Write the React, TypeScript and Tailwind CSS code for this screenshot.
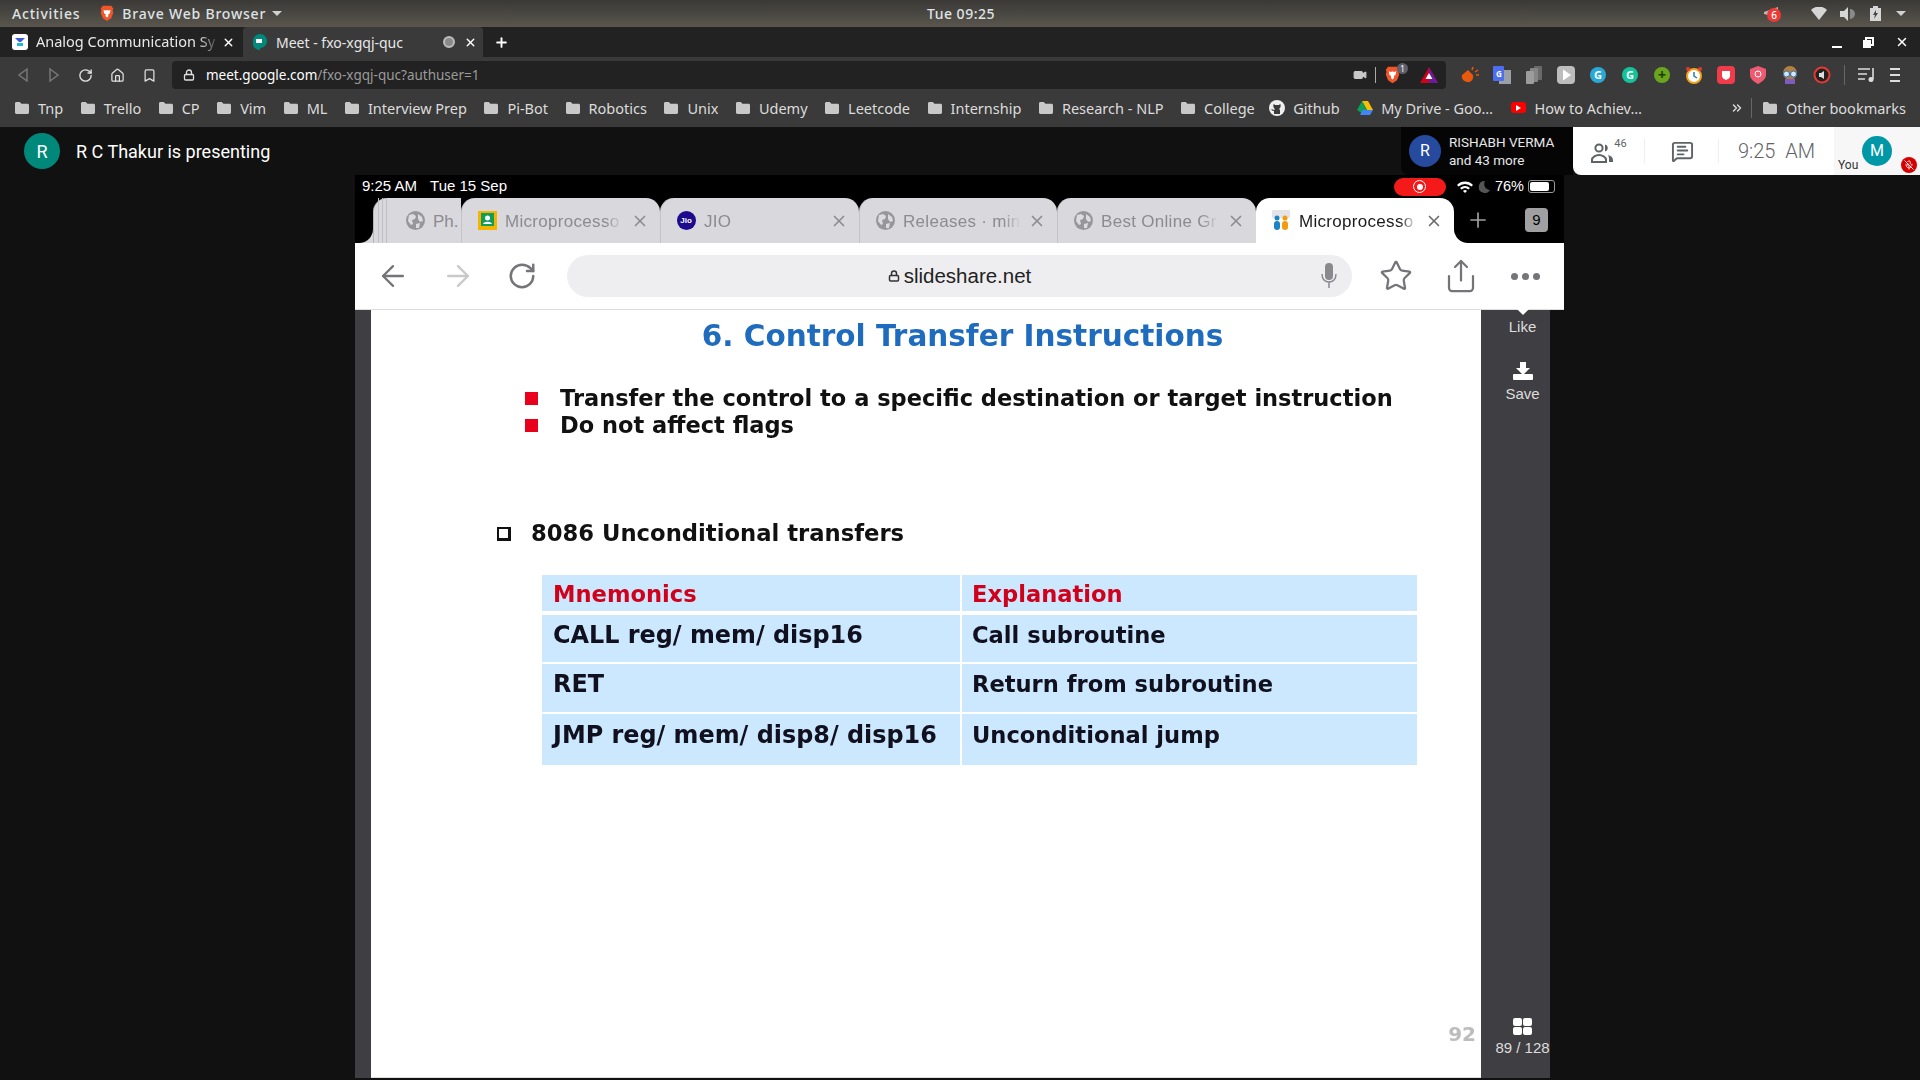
import React from 'react';
import { ArrowLeft, ArrowRight, RotateCw, Star, Share, X, Plus, Lock, Home, Bookmark, Video, MessageSquareText, MicOff, ChevronsRight } from 'lucide-react';

const ui = "font-['Noto_Sans',sans-serif]";

const Folder = () => (
  <svg width="14" height="12" viewBox="0 0 14 12" className="shrink-0">
    <path d="M0 1.5C0 .7.6 0 1.4 0h3.4l1.6 1.8h6.2c.8 0 1.4.6 1.4 1.4v7.4c0 .8-.6 1.4-1.4 1.4H1.4C.6 12 0 11.4 0 10.6z" fill="#c8c8c8" />
  </svg>
);

const BraveIcon = ({ size = 16 }: { size?: number }) => (
  <svg width={size} height={size * 1.15} viewBox="0 0 20 23">
    <path d="M4 1h12l3 4-1 3 1 3-3 8-6 4-6-4-3-8 1-3-1-3z" fill="#f1562b" />
    <path d="M5 7l3 1 2-1 2 1 3-1-1 5-2 1v3l-2 2-2-2v-3l-2-1z" fill="#fff" />
  </svg>
);

const Globe = () => (
  <svg width="19" height="19" viewBox="0 0 19 19" className="shrink-0">
    <circle cx="9.5" cy="9.5" r="9.5" fill="#97969b" />
    <path d="M3 4l4-1 3 2-1 3-3 1 1 4-2 1-3-4zM12 3l4 3 1 4-3 1-2-3zM10 13l4-1-1 5-3 0z" fill="#dcdbe0" />
  </svg>
);

const bookmarks = ['Tnp', 'Trello', 'CP', 'Vim', 'ML', 'Interview Prep', 'Pi-Bot', 'Robotics', 'Unix', 'Udemy', 'Leetcode', 'Internship', 'Research - NLP', 'College'];

const extensions: React.ReactNode[] = [
  <svg key="hand" width="18" height="18" viewBox="0 0 18 18"><path d="M1 9l6-5 5 5c1 4-2 8-6 7-4-1-6-4-5-7z" fill="#e8590c" /><path d="M11 4l1-3M14 6l3-2M15 9l3 0" stroke="#e8590c" strokeWidth="1.5" /></svg>,
  <svg key="tr" width="18" height="18" viewBox="0 0 18 18"><rect x="6" y="4" width="12" height="14" fill="#9aa0a6" /><rect width="11" height="15" rx="1" fill="#4e6ef2" /><text x="3" y="11" fontSize="8" fill="#fff" fontWeight="700">G</text></svg>,
  <svg key="cp" width="18" height="18" viewBox="0 0 18 18"><rect x="9" y="0" width="8" height="14" rx="1" fill="#6a6a6a" /><rect x="5" y="2" width="8" height="14" rx="1" fill="#858585" /><rect x="1" y="5" width="8" height="13" rx="1" fill="#9c9c9c" /></svg>,
  <svg key="pl" width="18" height="18" viewBox="0 0 18 18"><rect width="18" height="18" rx="4" fill="#bdbdbd" /><path d="M6 3.5l8 5.5-8 5.5z" fill="#fff" /></svg>,
  <div key="g1" className="w-4 h-4 rounded-full bg-[#2aa9d8] text-white text-[11px] leading-4 text-center font-bold">G</div>,
  <div key="g2" className="w-4 h-4 rounded-full bg-[#15c39a] text-white text-[11px] leading-4 text-center font-bold">G</div>,
  <div key="pl2" className="w-4 h-4 rounded-full bg-[#6aa51d] text-[#1c3b00] text-[14px] leading-[15px] text-center font-bold">+</div>,
  <svg key="cl" width="18" height="18" viewBox="0 0 18 18"><circle cx="9" cy="10" r="7" fill="#fff" stroke="#f4a21b" strokeWidth="2" /><path d="M9 6v4l3 2" stroke="#2a7fb8" strokeWidth="1.5" fill="none" /><circle cx="3" cy="3" r="2" fill="#e53935" /><circle cx="15" cy="3" r="2" fill="#e53935" /></svg>,
  <svg key="sh1" width="18" height="18" viewBox="0 0 18 18"><rect width="18" height="18" rx="4" fill="#ef3b4a" /><path d="M5 5h8v5c0 2-2 3-4 4-2-1-4-2-4-4z" fill="#fff" /></svg>,
  <svg key="sh2" width="18" height="18" viewBox="0 0 18 18"><path d="M9 0l8 3v6c0 4-4 7-8 9-4-2-8-5-8-9V3z" fill="#ee5a6f" /><circle cx="9" cy="8" r="3" fill="none" stroke="#fff" strokeWidth="1" /></svg>,
  <svg key="ow" width="18" height="18" viewBox="0 0 18 18"><circle cx="9" cy="7" r="7" fill="#b5803d" /><rect x="4" y="13" width="10" height="5" fill="#7c5cbf" /><circle cx="5.5" cy="8" r="3" fill="#cfe8ff" stroke="#2b6cb0" /><circle cx="12.5" cy="8" r="3" fill="#cfe8ff" stroke="#2b6cb0" /></svg>,
  <svg key="rc" width="18" height="18" viewBox="0 0 18 18"><circle cx="9" cy="9" r="7.5" fill="#222" stroke="#e53935" strokeWidth="2" /><path d="M6 7h2l3-2v8l-3-2H6z" fill="#ddd" /></svg>,
];

function ChromeTabs() {
  return (
    <div className="h-[30px] bg-[#222222] flex items-stretch text-[14px] text-[#e8e8e8]">
      <div className="w-[243px] flex items-center pl-[12px] shrink-0">
        <div className="w-4 h-4 rounded-[3px] bg-white flex items-center justify-center shrink-0">
          <svg width="10" height="10" viewBox="0 0 10 10"><path d="M0 1h10L6 5H4z" fill="#3b5bdb" /><rect x="2" y="6" width="6" height="3" fill="#22b8cf" /></svg>
        </div>
        <span className="ml-[8px] w-[184px] text-[14.5px] whitespace-nowrap [mask-image:linear-gradient(to_right,black_88%,transparent)]">Analog Communication Sy</span>
        <X size={13} strokeWidth={2.5} className="ml-[2px] shrink-0 text-white" />
      </div>
      <div className="w-[240px] bg-[#3a3a3a] rounded-t-[4px] flex items-center pl-[10px] shrink-0">
        <svg width="14" height="16" viewBox="0 0 14 16" className="shrink-0"><path d="M7 0a7 7 0 0 1 7 7 7 7 0 0 1-7 7v2a7 7 0 0 1-7-9 7 7 0 0 1 7-7z" fill="#00897b" /><rect x="3" y="5" width="6" height="4" fill="#fff" /></svg>
        <span className="ml-[9px] w-[167px] whitespace-nowrap">Meet - fxo-xgqj-quc</span>
        <div className="w-[12px] h-[12px] rounded-full border-2 border-[#bdbdbd] bg-[#8a8a8a] shrink-0" />
        <X size={13} strokeWidth={2.5} className="ml-[9px] shrink-0 text-white" />
      </div>
      <div className="flex items-center ml-[11px]"><Plus size={15} strokeWidth={3} className="text-white" /></div>
      <div className="ml-auto flex items-center gap-[21px] pr-[11px]">
        <div className="w-[10px] h-[2px] bg-white mt-[10px]" />
        <svg width="11" height="11" viewBox="0 0 11 11"><rect x="3" y="1" width="7" height="7" fill="none" stroke="#fff" strokeWidth="2" /><rect x="0" y="3" width="8" height="8" fill="#fff" /></svg>
        <X size={14} strokeWidth={2.5} className="text-white" />
      </div>
    </div>
  );
}

function ChromeToolbar() {
  return (
    <div className="h-[32px] bg-[#3a3a3a] pt-[4px] flex items-stretch text-[#d8d8d8]">
      <div className="w-[172px] flex items-center pl-[16px] gap-[17px] shrink-0">
        <svg width="14" height="14" viewBox="0 0 14 14"><path d="M11 1L3 7l8 6z" fill="none" stroke="#777" strokeWidth="1.5" /></svg>
        <svg width="14" height="14" viewBox="0 0 14 14"><path d="M3 1l8 6-8 6z" fill="none" stroke="#777" strokeWidth="1.5" /></svg>
        <RotateCw size={15} strokeWidth={2.2} className="text-[#e0e0e0]" />
        <Home size={15} strokeWidth={2} className="text-[#e0e0e0]" />
        <Bookmark size={15} strokeWidth={2} className="text-[#e0e0e0]" />
      </div>
      <div className="w-[1274px] bg-[#222222] rounded-[4px] flex items-center pl-[11px] pr-[8px] shrink-0">
        <Lock size={12} strokeWidth={2.6} className="text-[#e0e0e0]" />
        <span className="ml-[11px] text-[13.5px] text-white">meet.google.com<span className="text-[#9a9a9a]">/fxo-xgqj-quc?authuser=1</span></span>
        <div className="ml-auto flex items-center">
          <Video size={14} fill="#c8c8c8" className="text-[#c8c8c8]" />
          <div className="w-px h-[16px] bg-[#aaa] ml-[8px] mr-[9px]" />
          <div className="relative mr-[20px]">
            <BraveIcon size={15} />
            <div className="absolute -top-[3px] left-[12px] w-[11px] h-[11px] rounded-full bg-[#5f5f6b] text-[8px] leading-[11px] text-center text-white">1</div>
          </div>
          <svg width="18" height="16" viewBox="0 0 18 16"><path d="M9 0l9 16H0z" fill="#d0021b" /><path d="M9 0l9 16H9z" fill="#6a1b9a" /><path d="M9 6l3.5 6h-7z" fill="#fff" /></svg>
        </div>
      </div>
      <div className="flex items-center pl-[15px] gap-[14px]">
        {extensions.map((e, i) => (
          <div key={i} className="w-[18px] h-[18px] flex items-center justify-center shrink-0">{e}</div>
        ))}
        <div className="w-px h-[20px] bg-[#666] -mx-[1px]" />
        <svg width="18" height="16" viewBox="0 0 18 16"><path d="M0 2h12M0 7h9M0 12h7" stroke="#ddd" strokeWidth="1.6" /><path d="M15 1v11" stroke="#ddd" strokeWidth="1.6" /><circle cx="13" cy="12.5" r="2.5" fill="#ddd" /></svg>
        <div className="flex flex-col gap-[4px]">
          <div className="w-[10px] h-[2px] bg-[#ddd]" /><div className="w-[10px] h-[2px] bg-[#ddd]" /><div className="w-[10px] h-[2px] bg-[#ddd]" />
        </div>
      </div>
    </div>
  );
}

function BookmarksBar() {
  return (
    <div className="h-[38px] bg-[#3a3a3a] flex items-center pl-[15px] text-[14.5px] leading-[20px] text-[#dcdcdc] whitespace-nowrap">
      <div className="flex items-center gap-[17.5px] -mt-[1px]">
        {bookmarks.map((b) => (
          <div key={b} className="flex items-center gap-[9px]"><Folder /><span>{b}</span></div>
        ))}
        <div className="flex items-center gap-[8px] -ml-[3px]">
          <svg width="16" height="16" viewBox="0 0 16 16"><circle cx="8" cy="8" r="8" fill="#eee" /><path d="M5 14v-3c-2 0-2-1-3-2 2 0 2 1 3 1l1-1C4 8 4 4 5 4l1 1h4l1-1c1 0 1 4-1 5l1 1v4z" fill="#3a3a3a" /></svg>
          <span>Github</span>
        </div>
        <div className="flex items-center gap-[8px]">
          <svg width="16" height="14" viewBox="0 0 16 14"><path d="M5 0h6l5 9h-6z" fill="#fbbc04" /><path d="M5 0l5 9-2.5 5L0 9z" fill="#0f9d58" /><path d="M3 14l2.5-5H16l-3 5z" fill="#4285f4" /></svg>
          <span>My Drive - Goo…</span>
        </div>
        <div className="flex items-center gap-[9px]">
          <div className="w-[15px] h-[11px] rounded-[3px] bg-[#f00] flex items-center justify-center"><div className="w-0 h-0 border-y-[3px] border-y-transparent border-l-[5px] border-l-white" /></div>
          <span>How to Achiev…</span>
        </div>
      </div>
      <div className="ml-auto flex items-center pr-[14px]">
        <ChevronsRight size={14} strokeWidth={2.5} />
        <div className="w-px h-[20px] bg-[#666] ml-[7px] mr-[11px]" />
        <div className="flex items-center gap-[9px]"><Folder /><span>Other bookmarks</span></div>
      </div>
    </div>
  );
}

function MeetHeader() {
  return (
    <div className="h-[48px] flex items-stretch font-['Roboto',sans-serif]">
      <div className="flex items-center pl-[24px]">
        <div className="w-9 h-9 rounded-full bg-[#00897b] text-white text-[18px] flex items-center justify-center">R</div>
        <span className="ml-[16px] text-[18px] text-white">R C Thakur is presenting</span>
      </div>
      <div className="ml-auto flex items-stretch">
        <div className="w-[172px] bg-[#050505] rounded-bl-[8px] flex items-center pl-[8px]">
          <div className="w-[32px] h-[32px] rounded-full bg-[#254a9e] text-white text-[16px] flex items-center justify-center shrink-0">R</div>
          <div className="ml-[8px] text-[13.5px] leading-[18px] text-[#e8e8e8] whitespace-nowrap">
            <div>RISHABH VERMA</div>
            <div>and 43 more</div>
          </div>
        </div>
        <div className="w-[347px] bg-white rounded-bl-[8px] flex items-stretch text-[#5f6368]">
          <div className="w-[72px] flex items-center justify-center relative">
            <svg width="22" height="20" viewBox="0 0 22 20" className="mt-[3px]"><circle cx="8" cy="5" r="3.6" fill="none" stroke="#5f6368" strokeWidth="2" /><path d="M1 19v-2c0-3 4-5 7-5s7 2 7 5v2z" fill="none" stroke="#5f6368" strokeWidth="2" /><path d="M14 1.5a3.6 3.6 0 0 1 0 7zM17 12c3 .6 5 2.4 5 5v2h-4v-3c0-1.500-.4-3-1-4z" fill="#5f6368" /></svg>
            <span className="text-[11px] ml-[1px] mb-[14px]">46</span>
            <div className="absolute right-0 top-[12px] h-[24px] w-px bg-[#eceff1]" />
          </div>
          <div className="w-[74px] flex items-center justify-center relative">
            <MessageSquareText size={23} strokeWidth={2} />
            <div className="absolute right-0 top-[12px] h-[24px] w-px bg-[#eceff1]" />
          </div>
          <div className="w-[115px] flex items-center justify-center text-[20px] font-light">9:25&nbsp;&nbsp;AM</div>
          <div className="flex-1 bg-[#f7f7f7] relative">
            <span className="absolute left-[4px] bottom-[1px] text-[12px] text-[#333]">You</span>
            <div className="absolute left-[28px] top-[9px] w-[30px] h-[30px] rounded-full bg-[#0097a7] text-white text-[16px] flex items-center justify-center">M</div>
            <div className="absolute left-[67px] top-[30px] w-[16px] h-[16px] rounded-full bg-[#d50000] flex items-center justify-center"><MicOff size={10} className="text-white" /></div>
          </div>
        </div>
      </div>
    </div>
  );
}

function IPadTab({ icon, label, active, width, labelWidth }: { icon: React.ReactNode; label: string; active?: boolean; width: string; labelWidth: string }) {
  return (
    <div className={`${width} h-[45px] rounded-t-[14px] flex items-center shrink-0 ${active ? 'bg-white text-[#1b1b1d]' : 'bg-[#d9d8dd] text-[#8c8b90] border-l border-[#c4c3c8]'}`}>
      <div className="ml-[15px] w-[20px] flex justify-center shrink-0">{icon}</div>
      <span className={`ml-[8px] pt-[2px] ${labelWidth} text-[17px] tracking-[0.3px] whitespace-nowrap [mask-image:linear-gradient(to_right,black_85%,transparent)]`}>{label}</span>
      <X size={18} strokeWidth={2.2} className={`ml-auto mr-[11px] shrink-0 ${active ? 'text-[#6b6b6f]' : 'text-[#8c8b90]'}`} />
    </div>
  );
}

function IPadBrowser() {
  return (
    <div className="font-['Liberation_Sans',sans-serif]">
      <div className="h-[23px] bg-black flex items-center pl-[7px] pr-[9px] text-[15px] text-white">
        <span>9:25 AM</span>
        <span className="ml-[13px]">Tue 15 Sep</span>
        <div className="ml-auto flex items-center">
          <div className="w-[52px] h-[18px] rounded-full bg-[#f51a1a] flex items-center justify-center"><div className="w-[13px] h-[13px] rounded-full border border-white flex items-center justify-center"><div className="w-[6px] h-[6px] rounded-full bg-white" /></div></div>
          <svg width="16" height="12" viewBox="0 0 16 12" className="ml-[11px]"><path d="M0 4a11 11 0 0 1 16 0l-1.600 1.600a9 9 0 0 0-12.800 0zM3 7a7 7 0 0 1 10 0l-1.600 1.600a5 5 0 0 0-6.800 0zM6 10a3 3 0 0 1 4 0l-2 2z" fill="#fff" /></svg>
          <svg width="12" height="12" viewBox="0 0 12 12" className="ml-[5px]"><path d="M7 0a6 6 0 1 0 5 9A6 6 0 0 1 7 0z" fill="#555" /></svg>
          <span className="ml-[5px] text-[14.5px]">76%</span>
          <div className="ml-[4px] w-[27px] h-[13px] rounded-[3px] border border-[#999] p-[1px]"><div className="w-[19px] h-full bg-white rounded-[2px]" /></div>
        </div>
      </div>
      <div className="h-[45px] bg-black flex items-start">
        <div className="w-[18px] h-[45px] bg-[#d9d8dd] shrink-0"><div className="h-full bg-black rounded-br-[14px]" /></div>
        <div className="w-[88px] h-[45px] rounded-tl-[14px] bg-[#d9d8dd] border-l border-[#b5b4b9] flex items-center shrink-0 text-[#8c8b90] text-[17px] relative">
          <div className="absolute left-[4px] top-0 h-full w-px bg-[#c0bfc4]" />
          <div className="absolute left-[8px] top-0 h-full w-px bg-[#c0bfc4]" />
          <div className="absolute left-[12px] top-0 h-full w-px bg-[#c0bfc4]" />
          <div className="ml-[32px]"><Globe /></div>
          <span className="ml-[8px] pt-[2px]">Ph.</span>
        </div>
        <IPadTab width="w-[199px]" labelWidth="w-[118px]" label="Microprocesso" icon={<svg width="19" height="19" viewBox="0 0 19 19"><rect width="19" height="19" fill="#f4b400" /><rect x="3" y="2" width="13" height="13" fill="#0f9d58" /><circle cx="9.500" cy="7" r="2.500" fill="#fff" /><path d="M5 13c1-3 8-3 9 0z" fill="#fff" /></svg>} />
        <IPadTab width="w-[199px]" labelWidth="w-[110px]" label="JIO" icon={<div className="w-[19px] h-[19px] rounded-full bg-[#1d0a8c] text-white text-[8px] font-bold text-center leading-[19px]">Jio</div>} />
        <IPadTab width="w-[198px]" labelWidth="w-[118px]" label="Releases · min" icon={<Globe />} />
        <IPadTab width="w-[199px]" labelWidth="w-[118px]" label="Best Online Gr" icon={<Globe />} />
        <IPadTab active width="w-[198px]" labelWidth="w-[118px]" label="Microprocesso" icon={<svg width="18" height="21" viewBox="0 0 18 21"><rect width="18" height="8" rx="1" fill="#e4e4e8" /><circle cx="5" cy="8" r="2.500" fill="#1b84c4" /><circle cx="13" cy="8" r="2.500" fill="#f39c12" /><rect x="2" y="11" width="6" height="9" rx="3" fill="#1b84c4" /><rect x="10" y="11" width="6" height="9" rx="3" fill="#f39c12" /></svg>} />
        <div className="flex-1 h-[45px] bg-white">
          <div className="h-full bg-black rounded-bl-[14px] flex items-start">
            <Plus size={24} strokeWidth={1.7} className="ml-[12px] mt-[10px] text-[#a0a0a4] shrink-0" />
            <div className="ml-[35px] mt-[10px] w-[23px] h-[24px] rounded-[4px] bg-[#a0a0a3] text-black text-[15px] text-center leading-[24px]">9</div>
          </div>
        </div>
      </div>
      <div className="h-[67px] w-[1209px] bg-white border-b border-[#dddddd] flex items-center">
        <ArrowLeft size={34} strokeWidth={1.6} className="ml-[21px] text-[#757579] shrink-0" />
        <ArrowRight size={34} strokeWidth={1.6} className="ml-[31px] text-[#c9c9cc] shrink-0" />
        <RotateCw size={30} strokeWidth={2} className="ml-[32px] text-[#757579] shrink-0" />
        <div className="ml-[30px] w-[785px] h-[42px] rounded-full bg-[#eeeef0] flex items-center justify-center relative shrink-0">
          <Lock size={12} strokeWidth={3} className="text-[#333]" />
          <span className="ml-[4px] text-[20.500px] text-[#222]">slideshare.net</span>
          <svg width="16" height="26" viewBox="0 0 16 26" className="absolute right-[15px]"><rect x="4" y="0" width="8" height="17" rx="4" fill="#8a8a8e" /><path d="M1 11c0 5 3 8 7 8s7-3 7-8M8 19v6" fill="none" stroke="#8a8a8e" strokeWidth="1.500" /></svg>
        </div>
        <Star size={34} strokeWidth={1.6} className="ml-[27px] text-[#757579] shrink-0" />
        <Share size={36} strokeWidth={1.5} className="ml-[30px] text-[#757579] shrink-0" />
        <div className="ml-[32px] flex gap-[4px]">
          <div className="w-[7px] h-[7px] rounded-full bg-[#757579]" /><div className="w-[7px] h-[7px] rounded-full bg-[#757579]" /><div className="w-[7px] h-[7px] rounded-full bg-[#757579]" />
        </div>
      </div>
    </div>
  );
}

const rows = [
  { m: 'CALL reg/ mem/ disp16', e: 'Call subroutine', h: 'h-[47px] mt-[4px]', pt: 'pt-[3px]' },
  { m: 'RET', e: 'Return from subroutine', h: 'h-[48px] mt-[2px]', pt: 'pt-[3px]' },
  { m: 'JMP reg/ mem/ disp8/ disp16', e: 'Unconditional jump', h: 'h-[51px] mt-[2px]', pt: 'pt-[4px]' },
];

function Slide() {
  return (
    <div className="w-[1110px] h-[768px] bg-white shrink-0 font-['DejaVu_Sans',sans-serif] font-bold blur-[0.4px] border-b border-[#dddddd]">
      <h1 className="pt-[8px] pl-[73px] text-center text-[29.5px] leading-[36px] text-[#1f6cbf]">6. Control Transfer Instructions</h1>
      <div className="mt-[31px] pl-[154px] text-[22.500px] leading-[27px] text-[#111]">
        <div className="flex items-center"><div className="w-[13px] h-[13px] bg-[#e8001c] mr-[22px]" />Transfer the control to a specific destination or target instruction</div>
        <div className="flex items-center"><div className="w-[13px] h-[13px] bg-[#e8001c] mr-[22px]" />Do not affect flags</div>
      </div>
      <div className="mt-[81px] pl-[126px] flex items-center text-[22.700px] leading-[27px] text-[#111]">
        <div className="w-[14px] h-[14px] border-2 border-[#111] border-b-[3px] border-r-[3px] mr-[20px]" />8086 Unconditional transfers
      </div>
      <div className="mt-[28px] ml-[171px] w-[875px] text-[22.600px] text-[#10101e]">
        <div className="h-[36px] bg-[#cce8ff] flex items-center text-[#d0021b]">
          <div className="w-[420px] pl-[11px] pt-[3px] border-r-2 border-white h-full flex items-center">Mnemonics</div>
          <div className="pl-[10px] pt-[3px]">Explanation</div>
        </div>
        {rows.map((r) => (
          <div key={r.m} className={`${r.h} bg-[#cce8ff] flex`}>
            <div className={`w-[420px] pl-[11px] ${r.pt} border-r-2 border-white whitespace-nowrap text-[23.900px] leading-[34px]`}>{r.m}</div>
            <div className={`pl-[10px] ${r.pt} leading-[34px]`}>{r.e}</div>
          </div>
        ))}
      </div>
      <div className="mt-[254px] pr-[5px] text-right text-[20px] text-[#bdbdbd]">92</div>
    </div>
  );
}

function SideRail() {
  return (
    <div className="w-[69px] h-[768px] bg-[#3f3e42] shrink-0 flex flex-col items-center pl-[14px] text-[15px] text-[#dddddd] font-['Liberation_Sans',sans-serif]">
      <div className="w-[10px] h-[10px] bg-white rotate-45 -mt-[7px]" />
      <div className="mt-[6px] leading-[16px]">Like</div>
      <svg width="20" height="18" viewBox="0 0 20 18" className="mt-[27px]"><path d="M7 0h6v6h4l-7 7-7-7h4z" fill="#fff" /><rect y="12" width="20" height="6" rx="1" fill="#fff" /></svg>
      <div className="mt-[6px] leading-[16px]">Save</div>
      <div className="mt-[616px] w-[19px] h-[17px] grid grid-cols-2 gap-[1px] shrink-0">
        <div className="bg-white rounded-[2px]" /><div className="bg-white rounded-[2px]" /><div className="bg-white rounded-[2px]" /><div className="bg-white rounded-[2px]" />
      </div>
      <div className="mt-[5px] leading-[16px] whitespace-nowrap">89 / 128</div>
    </div>
  );
}

export default function App() {
  return (
    <div className={`w-[1920px] h-[1080px] overflow-hidden bg-[#111111] ${ui}`}>
      <div className="h-[27px] bg-gradient-to-b from-[#3a3936] to-[#5a564e] flex items-center px-[12px] text-[14px] font-medium tracking-[0.8px] text-[#dfe3e6] relative">
        <span>Activities</span>
        <div className="ml-[20px]"><BraveIcon size={14} /></div>
        <span className="ml-[8px]">Brave Web Browser</span>
        <div className="ml-[6px] w-0 h-0 border-x-[5px] border-x-transparent border-t-[5px] border-t-[#d0d0d0]" />
        <span className="absolute left-[927px] tracking-[0.5px]">Tue 09:25</span>
        <div className="ml-auto flex items-center pr-[2px]">
          <div className="relative w-[18px] h-[16px]">
            <svg width="18" height="14" viewBox="0 0 18 14"><path d="M1 6l14-5v11L1 8z" fill="#b8b8b8" /></svg>
            <div className="absolute right-0 top-[2px] w-[14px] h-[14px] rounded-full bg-[#ee3a35] text-white text-[10px] leading-[14px] text-center tracking-normal">6</div>
          </div>
          <svg width="16" height="13" viewBox="0 0 16 13" className="ml-[30px]"><path d="M0 3a11 11 0 0 1 16 0L8 13z" fill="#d6d6d6" /></svg>
          <svg width="15" height="14" viewBox="0 0 15 14" className="ml-[13px]"><path d="M0 4h4l4-4v14l-4-4H0z" fill="#d6d6d6" /><path d="M10 2a5 5 0 0 1 0 10z" fill="#8a8a8a" /></svg>
          <svg width="11" height="15" viewBox="0 0 11 15" className="ml-[15px]"><path d="M3 0h5v2h3v13H0V2h3z" fill="#d6d6d6" /><path d="M6 4L3 9h2l-1 4 4-6H6z" fill="#444" /></svg>
          <div className="ml-[15px] w-0 h-0 border-x-[5px] border-x-transparent border-t-[5px] border-t-[#d0d0d0]" />
        </div>
      </div>
      <ChromeTabs />
      <ChromeToolbar />
      <BookmarksBar />
      <MeetHeader />
      <div className="ml-[355px] w-[1209px] bg-black">
        <IPadBrowser />
        <div className="flex bg-[#111111]">
          <div className="w-[16px] bg-[#3f3e42] shrink-0" />
          <Slide />
          <SideRail />
        </div>
      </div>
    </div>
  );
}
